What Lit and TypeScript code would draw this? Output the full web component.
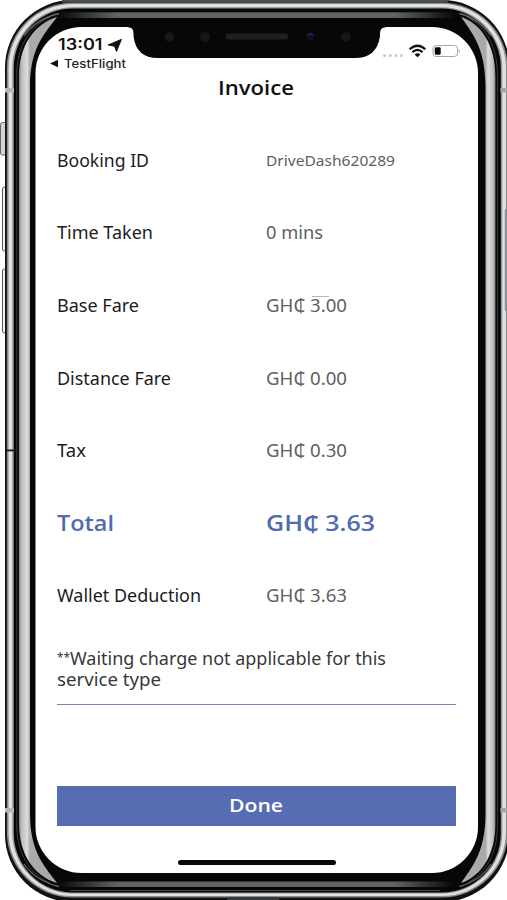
import { LitElement, html, css, svg } from "lit";
import { customElement } from "lit/decorators.js";

interface Row {
  label: string;
  labelWidth: number;
  value: string;
  valueWidth: number;
  kind?: string;
}

const ROWS: Row[] = [
  { label: "Booking ID", labelWidth: 92, value: "DriveDash620289", valueWidth: 129, kind: "compact" },
  { label: "Time Taken", labelWidth: 96, value: "0 mins", valueWidth: 57 },
  { label: "Base Fare", labelWidth: 82, value: "GH₵ 3.00", valueWidth: 81 },
  { label: "Distance Fare", labelWidth: 114, value: "GH₵ 0.00", valueWidth: 81 },
  { label: "Tax", labelWidth: 29, value: "GH₵ 0.30", valueWidth: 81 },
  { label: "Total", labelWidth: 57, value: "GH₵ 3.63", valueWidth: 109, kind: "total" },
  { label: "Wallet Deduction", labelWidth: 144, value: "GH₵ 3.63", valueWidth: 81 },
];

// One line of text set to an exact measure; the baseline sits 20px below the box top.
const line = (text: string, width: number, kind = "") => html`
  <svg class="line ${kind}" width=${width} height="26">
    <text x="0" y="20" textLength=${width} lengthAdjust="spacingAndGlyphs">${text}</text>
  </svg>`;

@customElement("phone-frame")
export class PhoneFrame extends LitElement {
  static styles = css`
    :host { display: block; width: 507px; height: 900px; }
    svg { display: block; }
  `;

  render() {
    const corner = (t: string) => svg`
      <g transform=${t}>
        <path d="M19 450V76C19 46 34 24 57 17C47 31 30 46 30 86V450Z" fill="url(#side)"/>
        <path d="M16.800 450V74C17 47 29 27 50 17" fill="none" stroke="#3c3e40" stroke-width="1"/>
        <path d="M24 36Q36 19 59 13.500" fill="none" stroke="#66686a" stroke-width="1.300"/>
      </g>`;
    return html`
      <svg width="507" height="900" viewBox="0 0 507 900">
        <defs>
          <linearGradient id="side" gradientUnits="userSpaceOnUse" x1="19" x2="30" y1="0" y2="0">
            <stop offset="0" stop-color="#85878a"/><stop offset=".25" stop-color="#bebfc0"/>
            <stop offset=".75" stop-color="#dcdddd"/><stop offset="1" stop-color="#a9abab"/>
          </linearGradient>
          <linearGradient id="bar" x1="0" x2="1" y1="0" y2="0">
            <stop offset="0" stop-color="#626463" stop-opacity="0"/><stop offset=".15" stop-color="#626463"/>
            <stop offset=".85" stop-color="#626463"/><stop offset="1" stop-color="#626463" stop-opacity="0"/>
          </linearGradient>
        </defs>
        <rect x=".5" y="122.500" width="7" height="32.500" rx="2" fill="#d4d5d5" stroke="#626466"/>
        <rect x="2.500" y="187" width="6" height="64" rx="2" fill="#f2f2f2" stroke="#55575a"/>
        <rect x="2.500" y="269" width="6" height="64" rx="2" fill="#f2f2f2" stroke="#55575a"/>
        <rect x="5" y="0" width="504.500" height="902" rx="67.500" fill="#111"/>
        <rect x="62" y="0" width="386" height="2.500" fill="#4c4f50"/>
        <rect x="6.800" y="2.800" width="501" height="894.700" rx="65.500" fill="#898b8d"/>
        <rect x="8.500" y="4" width="497.500" height="892" rx="64" fill="#dfe1e3"/>
        <rect x="12.300" y="7.200" width="490" height="886.300" rx="60.500" fill="#909294"/>
        <rect x="13.800" y="8.500" width="487" height="884" rx="59" fill="#060808"/>
        <rect x="57" y="12.300" width="398" height="5.700" fill="url(#bar)"/>
        <rect x="58" y="881.500" width="396" height="5.500" fill="url(#bar)"/>
        <rect x="70" y="890" width="370" height="1" fill="#474949"/>
        ${corner("")}
        ${corner("matrix(1 0 0 -1 0 900)")}
        ${corner("matrix(-.9 0 0 1 512.500 0)")}
        ${corner("matrix(-.9 0 0 -1 512.500 900)")}
        <rect x="5" y="88" width="9" height="4.500" fill="#b4b6b7"/>
        <rect x="5" y="808" width="9" height="4.500" fill="#b4b6b7"/>
        <rect x="500.500" y="88" width="7" height="4.500" fill="#a5a7a9"/>
        <rect x="500.500" y="808" width="7" height="4.500" fill="#a5a7a9"/>
        <rect x="6" y="449.500" width="9" height="1.800" fill="#151617"/>
        <rect x="504.800" y="209" width="2.200" height="102" fill="#8d8f98"/>
        <rect x="227" y="897.300" width="52" height="5" rx="2" fill="#35383a"/>
        <rect x="35.500" y="27" width="442.500" height="846" rx="46" fill="#fff"/>
        <path d="M128 26.500H386V27.300Q380 27.300 380 33.500V36Q377 58 355 58H158Q136 58 133.500 36V33.500Q133.500 27.300 128 27.300Z" fill="#060808"/>
        <circle cx="169.500" cy="37" r="4.800" fill="#151718"/>
        <circle cx="205" cy="37" r="4.800" fill="#151718"/>
        <rect x="225.500" y="33.500" width="63" height="6" rx="3" fill="#1e2020"/>
        <circle cx="310.500" cy="37" r="4.500" fill="#0c0c1b"/>
        <path d="M307.500 35.500Q310 32.500 313 35.300" fill="none" stroke="#25225b" stroke-width="2"/>
        <circle cx="346" cy="37" r="4.800" fill="#151718"/>
      </svg>`;
  }
}

@customElement("app-root")
export class AppRoot extends LitElement {
  static styles = css`
    :host {
      display: block; position: relative; width: 507px; height: 900px;
      overflow: hidden; background: #fff;
      font-family: "Noto Sans", "Open Sans", sans-serif;
    }
    .screen {
      position: absolute; inset: 27px 29px 27px 35px; box-sizing: border-box;
      padding: 0 22px; display: flex; flex-direction: column;
    }
    .line { display: block; overflow: visible; font-size: 18px; fill: #1c1c1e; flex: none; }
    .status { height: 47.500px; display: flex; justify-content: space-between; flex: none; }
    .clock { display: flex; padding: 2.500px 0 0 1px; gap: 5px; }
    .left { height: 47px; }
    .time { font: 600 15.500px Inter, sans-serif; fill: #111; }
    .back { display: flex; margin: -7.200px 0 0 -7px; gap: 5px; }
    .app { font: 500 11.500px Inter, sans-serif; fill: #222; }
    .right { display: block; margin-right: -5px; }
    .title { font: 600 20px "Open Sans", sans-serif; fill: #111; }
    .heading { display: flex; justify-content: center; height: 49px; margin-left: -2px; flex: none; }
    .row { display: grid; grid-template-columns: 209px 1fr; height: 72.600px; align-items: center; flex: none; }
    .value .line { fill: #606062; }
    .value .compact { font-size: 14.500px; margin-top: -1px; }
    .row .total { font: 600 22px "Open Sans", "Noto Sans", sans-serif; fill: #526bb0; position: relative; top: 1.500px; }
    .value { position: relative; }
    .mark { position: absolute; left: 46px; top: 4px; width: 17px; height: 1px; background: #b4b4b6; }
    .note { height: 74px; box-sizing: border-box; padding-top: 14px; border-bottom: 1.500px solid #7184bd; flex: none; margin-top: -.8px; }
    .note .line { height: 21px; fill: #38383a; }
    .note-line { display: flex; }
    .note .stars { font-size: 13px; margin-top: -2.500px; }
    button {
      margin: 80.700px 0 0; padding: 0; border: 0; height: 40px; background: #566db3;
      display: flex; align-items: center; justify-content: center; flex: none;
    }
    .done { font: 600 18.500px "Open Sans", sans-serif; fill: #fff; margin: -1px 0 0 -2px; }
    .home { width: 158px; height: 5px; border-radius: 3px; background: #080808; margin: 34px 0 0 120.500px; flex: none; }
  `;

  render() {
    return html`
      <phone-frame></phone-frame>
      <main class="screen">
        <header class="status">
          <div class="left">
            <div class="clock">
              ${line("13:01", 44.5, "time")}
              <svg width="14" height="24"><path d="M0 15L13.500 9.300L8.500 21.500L6.500 16.200Z" fill="#111" stroke="#111" stroke-width=".9" stroke-linejoin="round"/></svg>
            </div>
            <div class="back">
              <svg width="9" height="26"><path d="M0 15.500L8 11.800V19.200Z" fill="#111"/></svg>
              ${line("TestFlight", 62, "app")}
            </div>
          </div>
          <svg class="right" width="79" height="40">
            <g fill="#c9c9cb"><circle cx="2.500" cy="28.500" r="1.600"/><circle cx="8.300" cy="28.500" r="1.600"/><circle cx="14" cy="28.500" r="1.600"/><circle cx="19.500" cy="28.500" r="1.600"/></g>
            <g transform="translate(35.500 0)" fill="none" stroke="#111" stroke-width="2.200">
              <path d="M-7.800 22.300Q0 15.200 7.800 22.300"/><path d="M-5.100 25.100Q0 20.600 5.100 25.100"/>
              <path d="M-3 27.400Q0 24.900 3 27.400L0 30.300Z" fill="#111" stroke="none"/>
            </g>
            <rect x="51" y="18.500" width="24.500" height="11" rx="3.200" fill="#fff" stroke="#a5a5a7"/>
            <rect x="52.800" y="20.300" width="5.900" height="7.500" rx="1.200" fill="#080808"/>
            <path d="M76.800 22.300Q79 24 76.800 25.800Z" fill="#a5a5a7"/>
          </svg>
        </header>
        <div class="heading">${line("Invoice", 76, "title")}</div>
        ${ROWS.map((r, i) => html`
          <div class="row">
            ${line(r.label, r.labelWidth, r.kind === "total" ? "total" : "")}
            <div class="value">
              ${line(r.value, r.valueWidth, r.kind)}
              ${i === 2 ? html`<span class="mark"></span>` : ""}
            </div>
          </div>`)}
        <div class="note">
          <div class="note-line">
            ${line("**", 13, "stars")}
            ${line("Waiting charge not applicable for this", 316)}
          </div>
          ${line("service type", 104)}
        </div>
        <button>${line("Done", 54, "done")}</button>
        <div class="home"></div>
      </main>`;
  }
}
